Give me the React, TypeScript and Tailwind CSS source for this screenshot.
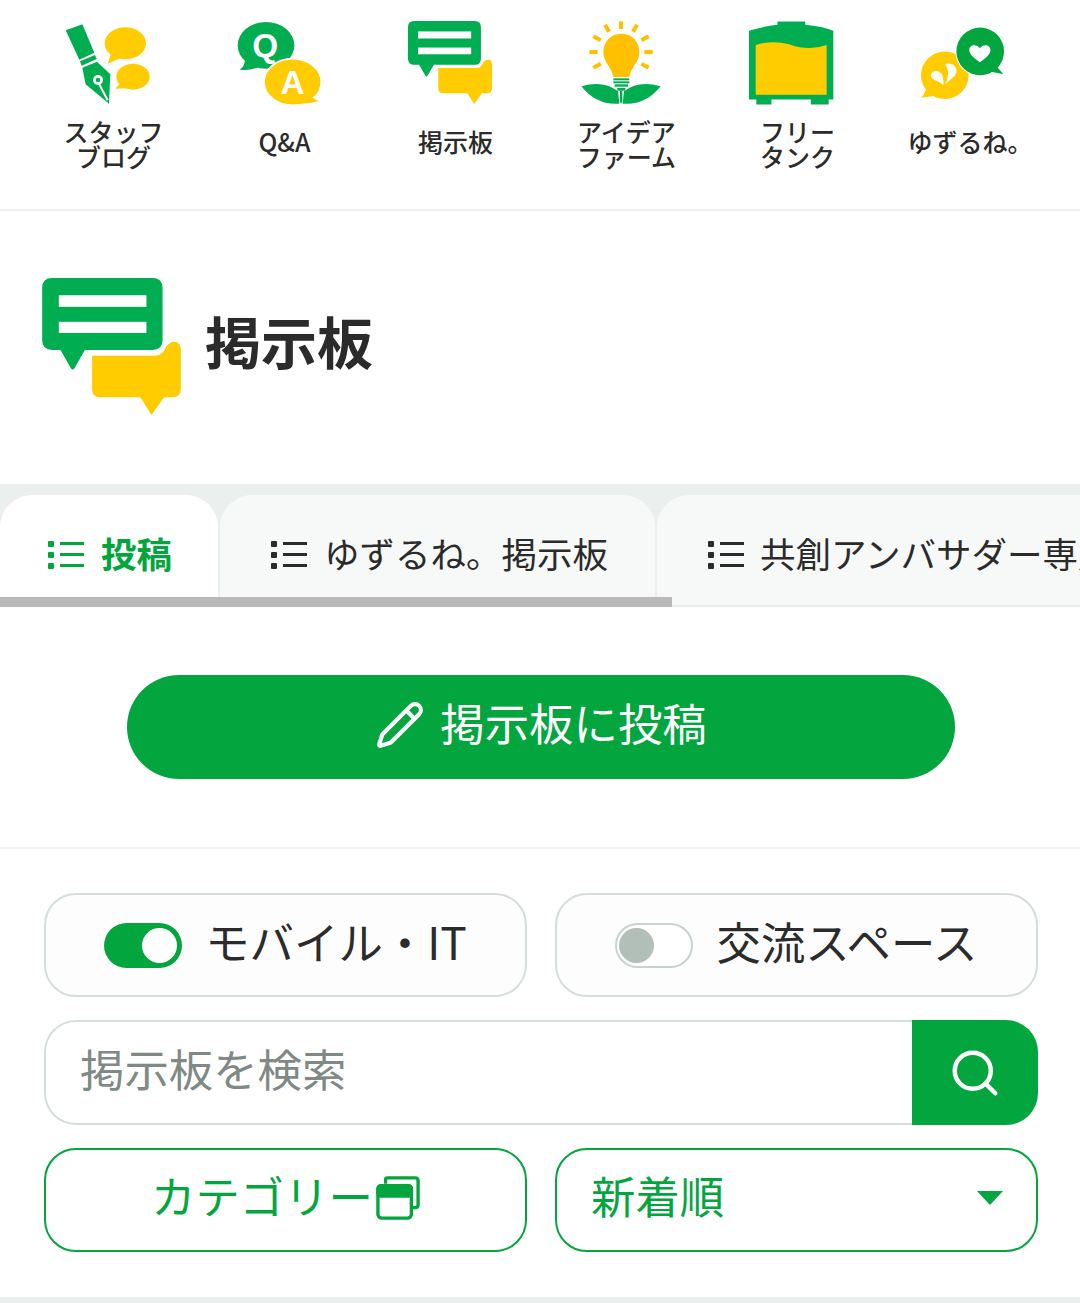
import React from 'react';
import { Pencil, Search } from 'lucide-react';

const GREEN = '#00ad50';
const YELLOW = '#ffcc00';

// All drawings are in 3x units of the page, same grid as the reference crops
const StaffBlogIcon = () => (
  <svg width="90" height="85" viewBox="70 60 270 255">
    <path d="M78 88 L128 70 L164 155 L119 176 Z" fill={GREEN} />
    <path d="M121 181 L166 162 L171 174 L126 194 Z" fill={GREEN} />
    <path d="M128 200 L172 182 L212 220 L208 308 L138 250 Z" fill={GREEN} />
    <circle cx="175" cy="237" r="15" fill="#fff" />
    <circle cx="175" cy="237" r="7" fill={GREEN} />
    <path d="M178 248 L204 298" stroke="#fff" strokeWidth="6" />
    <ellipse cx="257" cy="127" rx="62" ry="48" fill={YELLOW} />
    <path d="M215 155 L204 188 L245 170 Z" fill={YELLOW} />
    <ellipse cx="280" cy="227" rx="50" ry="39" fill={YELLOW} />
    <path d="M243 245 L227 263 L270 262 Z" fill={YELLOW} />
  </svg>
);

const QaIcon = () => (
  <svg width="84" height="84" viewBox="590 62 252 252">
    <ellipse cx="677" cy="135" rx="85" ry="70" fill={GREEN} />
    <path d="M615 175 Q612 200 598 208 Q630 212 655 200 Z" fill={GREEN} />
    <text x="675" y="170" textAnchor="middle" fontSize="100" fontWeight="700" fill="#fff" fontFamily="'Liberation Sans', sans-serif">Q</text>
    <ellipse cx="757" cy="245" rx="86" ry="70" fill={YELLOW} stroke="#fff" strokeWidth="5" />
    <path d="M805 280 Q815 295 836 302 Q800 312 770 310 Z" fill={YELLOW} />
    <text x="757" y="280" textAnchor="middle" fontSize="100" fontWeight="700" fill="#fff" fontFamily="'Liberation Sans', sans-serif">A</text>
  </svg>
);

const BoardIcon = ({ width, height }: { width: number; height: number }) => (
  <svg width={width} height={height} viewBox="1105 65 250 247">
    <path d="M1195 205 H1310 Q1322 205 1328 190 Q1334 180 1345 180 Q1355 182 1355 195 V265 Q1355 280 1340 280 H1325 L1302 312 L1282 280 H1210 Q1195 280 1195 265 Z" fill={YELLOW} />
    <path d="M1123 65 H1304 Q1322 65 1322 83 V177 Q1322 195 1304 195 H1182 L1163 228 Q1160 232 1157 228 L1138 195 H1123 Q1105 195 1105 177 V83 Q1105 65 1123 65 Z" fill={GREEN} />
    <rect x="1135" y="96" width="158" height="21" fill="#fff" />
    <rect x="1135" y="144" width="158" height="20" fill="#fff" />
  </svg>
);

const IdeaIcon = () => (
  <svg width="82" height="84" viewBox="120 64 246 252">
    <g stroke="#ffc000" strokeWidth="12">
      <path d="M243 65 V88" />
      <path d="M195 75 L207 96" />
      <path d="M291 75 L279 96" />
      <path d="M160 110 L182 122" />
      <path d="M326 110 L304 122" />
      <path d="M148 157 H173" />
      <path d="M313 157 H338" />
      <path d="M160 204 L182 192" />
      <path d="M326 204 L304 192" />
    </g>
    <path d="M244 102 C208 102 190 130 190 158 C190 188 214 200 220 232 H268 C274 200 298 188 298 158 C298 130 280 102 244 102 Z" fill="#ffc000" />
    <g fill={GREEN}>
      <rect x="220" y="236" width="48" height="6" />
      <rect x="220" y="245" width="48" height="6" />
      <rect x="224" y="254" width="40" height="7" />
      <rect x="232" y="265" width="24" height="8" />
      <rect x="240" y="273" width="7" height="36" />
      <path d="M124 260 Q190 240 234 275 L238 312 Q170 318 124 260 Z" />
      <path d="M362 260 Q296 240 252 275 L248 312 Q316 318 362 260 Z" />
    </g>
  </svg>
);

const TankIcon = () => (
  <svg width="85" height="84" viewBox="630 64 254 250">
    <path d="M630 93 Q670 80 715 75 V65 H798 V75 Q850 80 882 93 V298 H868 V313 H815 V298 H697 V313 H652 V298 H630 Z" fill={GREEN} />
    <path d="M650 135 Q700 120 750 133 Q810 155 862 135 V284 H650 Z" fill={YELLOW} />
  </svg>
);

const YuzuruneIcon = () => (
  <svg width="86" height="74" viewBox="1140 76 260 222" className="mt-[5px]">
    <circle cx="1215" cy="224" r="72" fill={YELLOW} />
    <path d="M1160 265 L1145 292 L1190 285 Z" fill={YELLOW} />
    <path d="M1172 224 C1178 206 1202 208 1208 226 C1211 236 1212 246 1210 254 C1200 240 1176 242 1172 224 Z" fill="#fff" />
    <path d="M1216 190 C1238 184 1254 198 1250 216 C1246 232 1224 240 1215 256 C1226 230 1230 212 1216 190 Z" fill="#fff" />
    <circle cx="1322" cy="152" r="75" fill="#fff" />
    <circle cx="1322" cy="152" r="72" fill="#03a63e" />
    <path d="M1370 195 L1392 220 L1350 213 Z" fill="#03a63e" />
    <path d="M1321 185 C1300 170 1289 160 1289 148 C1289 130 1312 128 1321 143 C1330 128 1353 130 1353 148 C1353 160 1342 170 1321 185 Z" fill="#fff" />
  </svg>
);

const ListIcon = ({ color }: { color: string }) => (
  <svg width="36" height="30" viewBox="0 0 36 30" fill={color}>
    <rect x="0" y="1" width="6" height="6" rx="1" />
    <rect x="0" y="12" width="6" height="6" rx="1" />
    <rect x="0" y="23" width="6" height="6" rx="1" />
    <rect x="12" y="2" width="24" height="3" />
    <rect x="12" y="13" width="24" height="3" />
    <rect x="12" y="24" width="24" height="3" />
  </svg>
);

const WindowIcon = () => (
  <svg width="44" height="44" viewBox="0 0 46 46" fill="none" stroke="#03a63e" strokeWidth="3.5" className="mb-[4px] ml-[3px]">
    <path d="M10 8 V4 Q10 2 12 2 H41 Q44 2 44 5 V30 Q44 33 41 33 H37" />
    <rect x="2" y="10" width="35" height="34" rx="4" />
    <rect x="2" y="10" width="35" height="11" rx="3" fill="#03a63e" />
  </svg>
);

const navItems = [
  { icon: <StaffBlogIcon />, lines: ['スタッフ', 'ブログ'], w: 'w-[171px]', iconPad: 'pr-[12px]', textPad: '' },
  { icon: <QaIcon />, lines: ['Q&A'], w: 'w-[171px]', iconPad: 'pr-[12px]', textPad: 'pb-[6px] font-bold' },
  { icon: <BoardIcon width={84} height={83} />, lines: ['掲示板'], w: 'w-[171px]', iconPad: 'pr-[12px]', textPad: 'pb-[6px]' },
  { icon: <IdeaIcon />, lines: ['アイデア', 'ファーム'], w: 'w-[171px]', iconPad: 'pr-[12px]', textPad: '' },
  { icon: <TankIcon />, lines: ['フリー', 'タンク'], w: 'w-[171px]', iconPad: 'pr-[12px]', textPad: '' },
  { icon: <YuzuruneIcon />, lines: ['ゆずるね。'], w: 'w-[160px]', iconPad: '', textPad: 'pb-[6px] pl-[14px]' },
];

const Toggle = ({ on }: { on: boolean }) =>
  on ? (
    <span className="flex h-[45px] w-[78px] items-center justify-end rounded-full bg-[#03a63e] pr-[5px]">
      <span className="h-[35px] w-[35px] rounded-full bg-white" />
    </span>
  ) : (
    <span className="flex h-[45px] w-[78px] items-center rounded-full border-2 border-[#c9d3ce] bg-white pl-[2px]">
      <span className="h-[35px] w-[35px] rounded-full bg-[#b2bfb8]" />
    </span>
  );

export default function App() {
  return (
    <div
      className="h-[1303px] w-[1080px] overflow-hidden bg-white text-[#2b2b2b]"
      style={{ fontFamily: "'Noto Sans CJK JP', 'Noto Sans', sans-serif" }}
    >
      {/* Top nav */}
      <div className="flex h-[211px] border-b-2 border-[#eef0ef] pl-[28px]">
        {navItems.map((item) => (
          <div key={item.lines[0]} className={`flex flex-col items-center ${item.w}`}>
            <div className={`flex h-[106px] items-start justify-center pt-[21px] ${item.iconPad}`}>{item.icon}</div>
            <div className={`flex h-[76px] flex-col justify-center text-center text-[25px] leading-[25px] font-medium ${item.textPad}`}>
              {item.lines.map((line) => (
                <span key={line}>{line}</span>
              ))}
            </div>
          </div>
        ))}
      </div>

      {/* Title */}
      <div className="flex h-[273px] items-center gap-[24px] pb-[2px] pl-[42px]">
        <BoardIcon width={139} height={137} />
        <h1 className="pb-[14px] text-[56px] leading-none font-bold">掲示板</h1>
      </div>

      {/* Tabs */}
      <div className="relative h-[123px] overflow-hidden bg-[#ebefed] pt-[11px]">
        <div className="flex h-[112px] gap-[2px]">
          <div className="flex w-[218px] shrink-0 items-center gap-[17px] rounded-t-[32px] bg-white pt-[8px] pl-[48px] text-[35.5px] font-bold text-[#03a63e]">
            <ListIcon color="#03a63e" />
            <span className="pb-[4px]">投稿</span>
          </div>
          <div className="flex w-[435px] shrink-0 items-center gap-[17px] rounded-t-[32px] bg-[#f7f9f8] pt-[8px] pl-[51px] text-[35.5px]">
            <ListIcon color="#2b2b2b" />
            <span className="pb-[4px]">ゆずるね。掲示板</span>
          </div>
          <div className="flex w-[600px] shrink-0 items-center gap-[16px] rounded-t-[32px] bg-[#f7f9f8] pt-[8px] pl-[51px] text-[35.5px] whitespace-nowrap">
            <ListIcon color="#2b2b2b" />
            <span className="pb-[4px]">共創アンバサダー専用掲示板</span>
          </div>
        </div>
        <div className="absolute bottom-0 left-0 h-[2px] w-full bg-[#e8ecea]" />
        <div className="absolute bottom-0 left-0 h-[10px] w-[672px] bg-[#b9b9b9]" />
      </div>

      {/* Post button */}
      <div className="h-[242px] border-b-2 border-[#eef0ef] pt-[68px] pl-[127px]">
        <div className="flex h-[104px] w-[828px] items-center justify-center gap-[15px] rounded-full bg-[#03a63e] text-[44.4px] text-white">
          <span className="pb-[4px]">
            <Pencil size={50} strokeWidth={2} />
          </span>
          <span className="pb-[10px]">掲示板に投稿</span>
        </div>
      </div>

      {/* Filters */}
      <div className="grid grid-cols-2 gap-x-[28px] pt-[44px] pr-[42px] pl-[44px]">
        <div className="flex h-[104px] items-center justify-center gap-[23px] rounded-[32px] border-2 border-[#d5dedA] bg-[#fdfdfd] text-[44.4px]">
          <Toggle on />
          <span className="pb-[8px]">モバイル・IT</span>
        </div>
        <div className="flex h-[104px] items-center justify-center gap-[23px] rounded-[32px] border-2 border-[#d5dedA] bg-[#fdfdfd] text-[44.4px]">
          <Toggle on={false} />
          <span className="pb-[8px]">交流スペース</span>
        </div>
      </div>
      <div className="mt-[23px] mr-[42px] ml-[44px] flex h-[105px]">
        <div className="flex flex-1 items-center rounded-l-[32px] border-2 border-r-0 border-[#d5dedA] pb-[8px] pl-[34px] text-[44.4px] text-[#7f8a85]">
          掲示板を検索
        </div>
        <div className="flex w-[126px] items-center justify-center rounded-r-[32px] bg-[#03a63e] text-white">
          <Search size={54} strokeWidth={2} />
        </div>
      </div>
      <div className="mt-[23px] grid grid-cols-2 gap-x-[28px] pr-[42px] pl-[44px]">
        <div className="flex h-[104px] items-center justify-center rounded-[32px] border-2 border-[#03a63e] text-[44.4px] text-[#03a63e]">
          <span className="pb-[10px]">カテゴリー</span>
          <WindowIcon />
        </div>
        <div className="flex h-[104px] items-center justify-between rounded-[32px] border-2 border-[#03a63e] pr-[33px] pl-[34px] text-[44.4px] text-[#03a63e]">
          <span className="pb-[10px]">新着順</span>
          <svg width="26" height="14" viewBox="0 0 26 14" fill="#03a63e" className="mb-[4px]">
            <path d="M0 0 H26 L13 14 Z" />
          </svg>
        </div>
      </div>
      <div className="mt-[45px] h-[6px] bg-[#ebefed]" />
    </div>
  );
}
